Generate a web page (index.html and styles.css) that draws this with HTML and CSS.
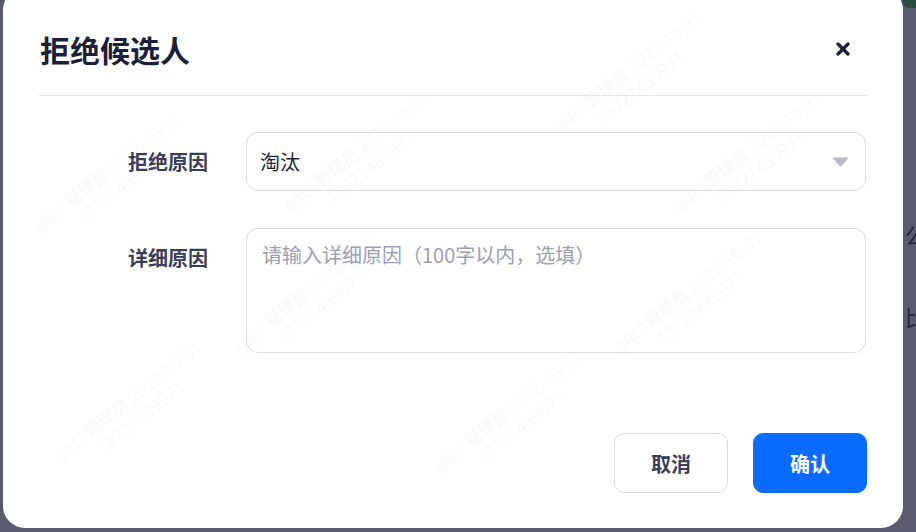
FILE: index.html
```html
<!DOCTYPE html>
<html lang="zh-CN">
<head>
<meta charset="utf-8">
<title>拒绝候选人</title>
<link rel="stylesheet" href="styles.css">
</head>
<body>
<div class="stage">
  <div class="modal">
    <div class="wm-layer" aria-hidden="true">
      <div class="wm" style="left:540px;top:70px">gqc1管理员 2022-10-31<br>13721439971</div>
      <div class="wm" style="left:20px;top:170px">gqc1管理员 2022-10-31<br>13721439971</div>
      <div class="wm" style="left:270px;top:150px">gqc1管理员 2022-10-31<br>13721439971</div>
      <div class="wm" style="left:660px;top:150px">gqc1管理员 2022-10-31<br>13721439971</div>
      <div class="wm" style="left:220px;top:290px">gqc1管理员 2022-10-31<br>13721439971</div>
      <div class="wm" style="left:600px;top:290px">gqc1管理员 2022-10-31<br>13721439971</div>
      <div class="wm" style="left:40px;top:400px">gqc1管理员 2022-10-31<br>13721439971</div>
      <div class="wm" style="left:420px;top:410px">gqc1管理员 2022-10-31<br>13721439971</div>
    </div>
    <div class="header">
      <h1 class="title">拒绝候选人</h1>
      <button class="close" aria-label="关闭">
        <svg width="14" height="14" viewBox="0 0 14 14"><path d="M2 2L12 12M12 2L2 12" stroke="#1b1f3b" stroke-width="3.2" stroke-linecap="round"/></svg>
      </button>
    </div>
    <div class="form">
      <div class="label label-select">拒绝原因</div>
      <div class="select">
        <span class="select-value">淘汰</span>
        <svg class="caret" width="17" height="10" viewBox="0 0 17 10"><path d="M1.5 0.5H15.5Q16.8 0.5 16 1.6L9.4 9.1Q8.5 10 7.6 9.1L1 1.6Q0.2 0.5 1.5 0.5Z" fill="#b9b9cb"/></svg>
      </div>
      <div class="label label-area">详细原因</div>
      <textarea class="area" placeholder="请输入详细原因（100字以内，选填）"></textarea>
    </div>
    <div class="footer">
      <button class="btn btn-cancel">取消</button>
      <button class="btn btn-ok">确认</button>
    </div>
  </div>
  <div class="backdrop-strip">
    <div class="green"></div>
    <div class="bg-char c1">公</div>
    <div class="bg-char c2">比</div>
  </div>
</div>
</body>
</html>
```
FILE: styles.css
```css
* { box-sizing: border-box; }
html, body {
  margin: 0;
  padding: 0;
  width: 916px;
  height: 532px;
  overflow: hidden;
  background: #5a5b71;
  font-family: "Noto Sans CJK SC", "Noto Sans", sans-serif;
}
.stage {
  display: flex;
  padding-left: 3px;
  height: 532px;
}
.modal {
  position: relative;
  width: 900px;
  height: 540px;
  margin-top: -12px;
  background: #fff;
  border-radius: 22px;
  display: flex;
  flex-direction: column;
  overflow: hidden;
  flex-shrink: 0;
}
.wm-layer {
  position: absolute;
  inset: 0;
  pointer-events: none;
}
.wm {
  position: absolute;
  font-family: "Noto Sans", sans-serif;
  font-size: 17px;
  font-weight: 300;
  line-height: 21px;
  color: #f7f7f9;
  transform: rotate(-38deg);
  white-space: nowrap;
  text-align: center;
}
.header {
  position: relative;
  margin: 0 36px 0 36px;
  padding: 41px 0 26px 1px;
  border-bottom: 1px solid #e7e5f1;
  display: flex;
  align-items: center;
  justify-content: space-between;
}
.title {
  margin: 0;
  font-size: 30px;
  line-height: 40px;
  font-weight: 700;
  color: #1b1f3b;
}
.close {
  border: 0;
  background: none;
  padding: 0;
  margin-right: 17px;
  width: 14px;
  height: 14px;
  display: flex;
}
.form {
  position: relative;
  display: grid;
  grid-template-columns: 169px 620px;
  column-gap: 38px;
  row-gap: 37px;
  margin: 36px 0 0 36px;
}
.label {
  text-align: right;
  font-size: 20px;
  font-weight: 700;
  color: #3a3e58;
  line-height: 28px;
}
.label-select {
  align-self: center;
}
.label-area {
  padding-top: 16px;
}
.select {
  height: 59px;
  border: 1px solid #dcdbe8;
  border-radius: 12px;
  display: flex;
  align-items: center;
  justify-content: space-between;
  padding: 0 16px 0 13px;
}
.select-value {
  font-size: 20px;
  color: #1b1f3b;
  line-height: 28px;
}
.caret { display: block; }
.area {
  height: 125px;
  border: 1px solid #dcdbe8;
  border-radius: 12px;
  padding: 12px 15px;
  font-family: inherit;
  font-size: 20px;
  line-height: 28px;
  color: #1b1f3b;
  resize: none;
  outline: none;
  background: transparent;
}
.area::placeholder {
  color: #9c9eb5;
}
.footer {
  position: relative;
  display: flex;
  justify-content: flex-end;
  gap: 25px;
  margin: 80px 36px 0 0;
}
.btn {
  width: 114px;
  height: 60px;
  border-radius: 10px;
  font-family: inherit;
  font-size: 20px;
  font-weight: 700;
}
.btn-cancel {
  background: #fff;
  border: 1px solid #dcdbe8;
  color: #3a3e58;
}
.btn-ok {
  background: #0a6cff;
  border: 1px solid #0a6cff;
  color: #fff;
}
.backdrop-strip {
  position: relative;
  flex: 1;
  overflow: hidden;
}
.green {
  height: 8px;
  background: #2a4d40;
  border-bottom-left-radius: 6px;
}
.bg-char {
  position: absolute;
  left: 2px;
  font-size: 22px;
  line-height: 24px;
  color: #232741;
}
.c1 { top: 222px; }
.c2 { top: 304px; }
```
